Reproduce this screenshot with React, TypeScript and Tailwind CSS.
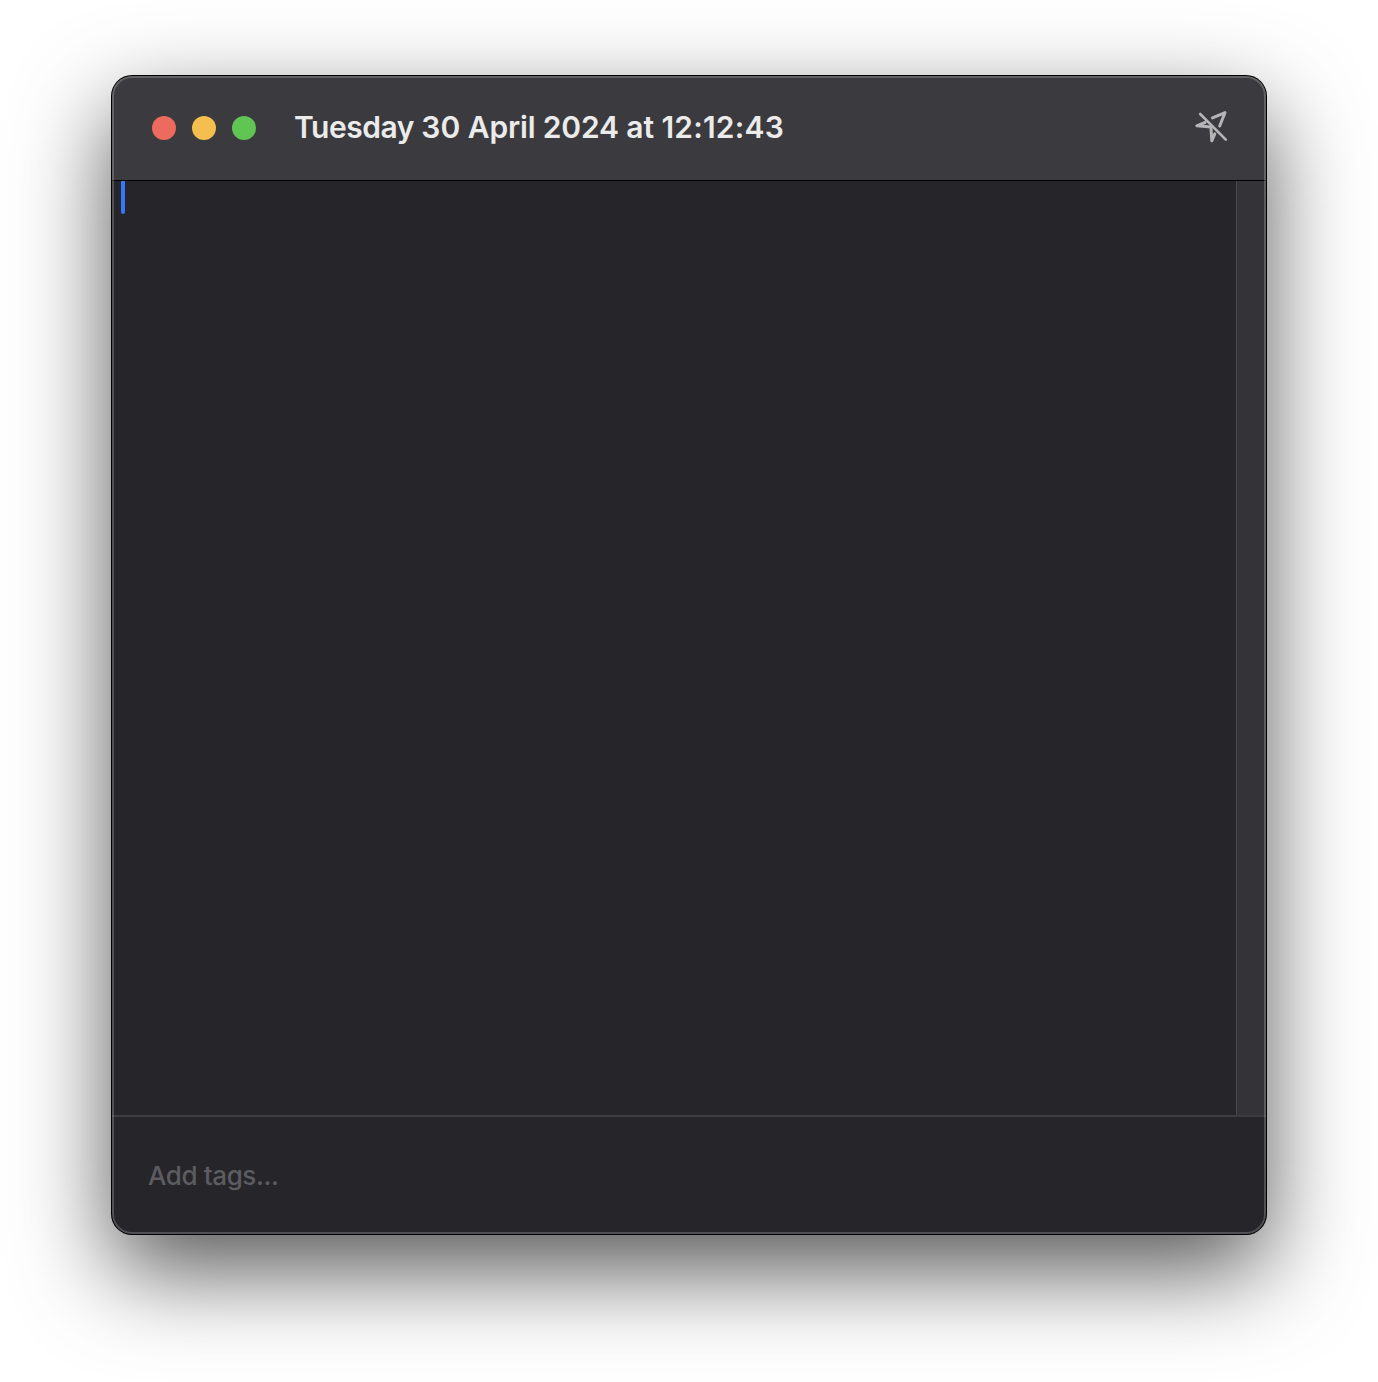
export default function App() {
  return (
    <main className="h-[1382px] w-[1378px] overflow-hidden bg-white px-[112px] pt-[76px] font-[Inter,sans-serif]">
      <section className="relative flex h-[1158px] w-[1154px] flex-col overflow-hidden rounded-[20px] bg-[#26252a] shadow-[0_0_0_1px_#000,0_36px_94px_rgba(0,0,0,0.67)]">
        <header className="flex h-[105px] shrink-0 items-center border-b border-black bg-[#3b3a3e] pr-[38px] pl-[40px]">
          <div className="flex gap-4">
            <span className="size-6 rounded-full bg-[#ed6a5e]" />
            <span className="size-6 rounded-full bg-[#f5bf4f]" />
            <span className="size-6 rounded-full bg-[#61c554]" />
          </div>
          <h1 className="mb-0.5 ml-[38px] text-[30px] leading-9 font-semibold tracking-[-0.02px] whitespace-nowrap text-[#ebebeb]">
            <span className="tracking-[-0.5px]">Tuesday</span> 30{" "}
            <span className="tracking-[-0.15px]">April 2024 at</span>{" "}
            <span className="tracking-[0.2px]">12:12:43</span>
          </h1>
          <svg className="mb-1 ml-auto size-9" viewBox="0 0 36 36" fill="none" stroke="#b5b5b7" strokeWidth="3" strokeLinecap="round" strokeLinejoin="round">
            <path d="M8.2 6 33.8 31.6" strokeWidth="2.6" />
            <path d="M20.5 9.9 33 4.6 27.7 18" />
            <path d="M13 14.5 4.8 17.8 18.9 19.1 19.8 32.8 22.8 25.8" />
          </svg>
        </header>
        <div className="flex min-h-0 flex-1">
          <div className="flex-1 pl-[9px]">
            <div className="h-[33px] w-1 rounded-b-[2px] bg-[#3478f6]" />
          </div>
          <div className="w-[30px] border-l border-[#48474b] bg-[#343338]" />
        </div>
        <footer className="flex h-[119px] shrink-0 items-center border-t-2 border-[#3d3c41] pl-9 text-[26px] font-[450] tracking-[-0.4px] text-[#5d5c60]">
          Add tags...
        </footer>
        <div className="pointer-events-none absolute inset-0 rounded-[20px] border-2 border-white/20" />
      </section>
    </main>
  );
}
